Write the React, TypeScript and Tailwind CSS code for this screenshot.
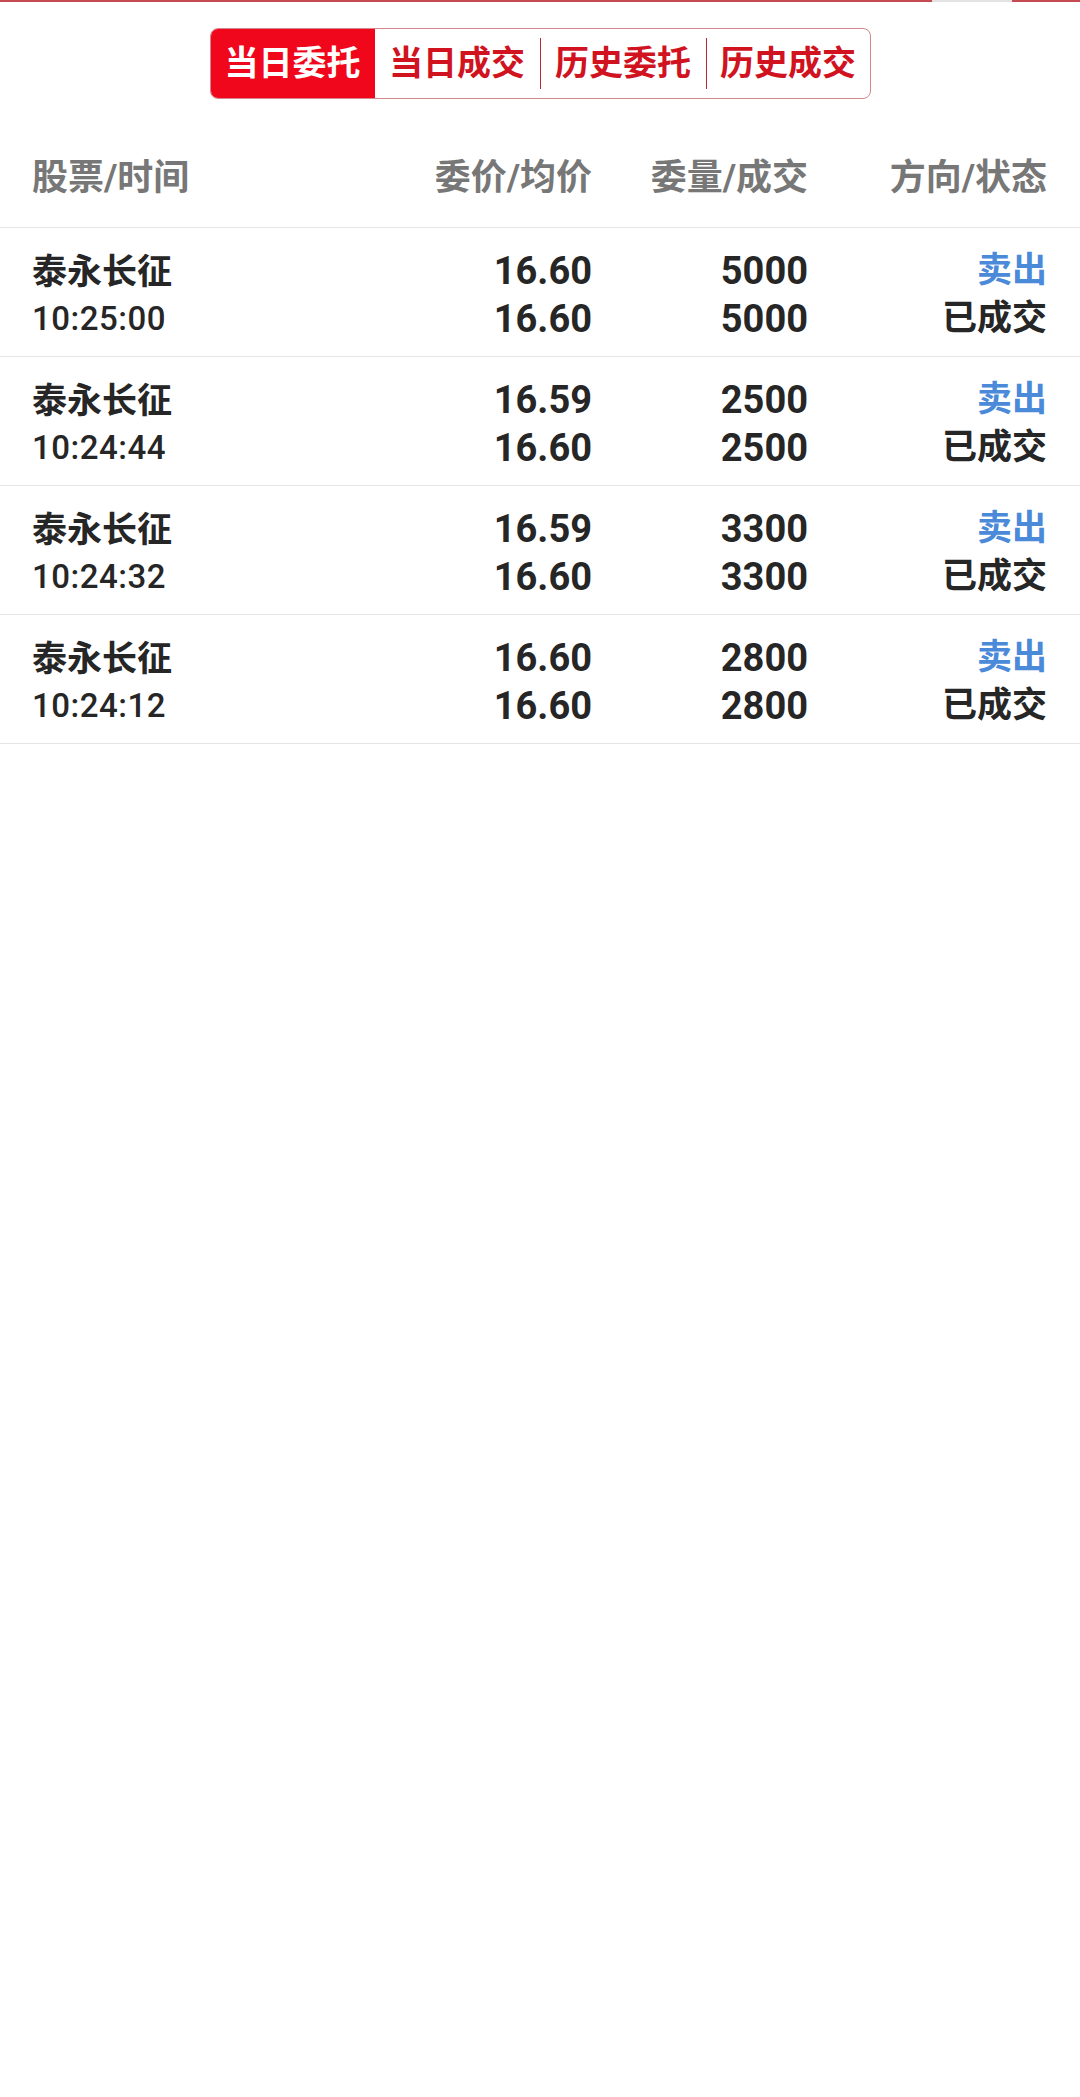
import React from "react";

const rows = [
  { name: "泰永长征", time: "10:25:00", p1: "16.60", p2: "16.60", q1: "5000", q2: "5000" },
  { name: "泰永长征", time: "10:24:44", p1: "16.59", p2: "16.60", q1: "2500", q2: "2500" },
  { name: "泰永长征", time: "10:24:32", p1: "16.59", p2: "16.60", q1: "3300", q2: "3300" },
  { name: "泰永长征", time: "10:24:12", p1: "16.60", p2: "16.60", q1: "2800", q2: "2800" },
];

export default function App() {
  return (
    <div className="w-[1080px] min-h-[2097px] bg-white font-['Roboto','Noto_Sans_CJK_SC',sans-serif] text-[#262626]">
      <div className="flex h-[2px]">
        <div className="w-[932px] bg-[#c64a52]" />
        <div className="w-[80px] bg-[#e3e3e3]" />
        <div className="flex-1 bg-[#c64a52]" />
      </div>
      <div className="flex justify-center pt-[26px]">
        <div className="flex h-[71px] rounded-[8px] border-[1.5px] border-[#d4878d] overflow-hidden">
          <div className="w-[164px] flex items-center justify-center bg-[#f0071b] text-white text-[34px] font-bold">
            当日委托
          </div>
          <div className="w-[166px] flex items-center justify-center text-[#d0131f] text-[34px] font-bold border-r-[1.5px] border-[#b32a31] my-[9px]">
            当日成交
          </div>
          <div className="w-[166px] flex items-center justify-center text-[#d0131f] text-[34px] font-bold border-r-[1.5px] border-[#b32a31] my-[9px]">
            历史委托
          </div>
          <div className="w-[163px] flex items-center justify-center text-[#d0131f] text-[34px] font-bold">
            历史成交
          </div>
        </div>
      </div>
      <div className="mt-[28px] h-[101px] grid grid-cols-[344px_216px_216px_239px] items-center px-[32px] pt-[2px] border-b border-[#e6e6e6] text-[36px] font-bold text-[#777777]">
        <div>股票/时间</div>
        <div className="text-right">委价/均价</div>
        <div className="text-right">委量/成交</div>
        <div className="text-right">方向/状态</div>
      </div>
      {rows.map((r, i) => (
        <div
          key={i}
          className="grid grid-cols-[344px_216px_216px_239px] px-[32px] pt-[19px] pb-[13px] border-b border-[#e6e6e6] leading-[48px]"
        >
          <div className="flex flex-col">
            <span className="text-[35px] font-bold text-[#262626] leading-[52px]">{r.name}</span>
            <span className="text-[33px] font-medium text-[#262626] leading-[40px] tracking-[0.5px]">{r.time}</span>
          </div>
          <div className="flex flex-col items-end text-[38px] font-bold">
            <span>{r.p1}</span>
            <span>{r.p2}</span>
          </div>
          <div className="flex flex-col items-end text-[38px] font-bold">
            <span>{r.q1}</span>
            <span>{r.q2}</span>
          </div>
          <div className="flex flex-col items-end text-[35px] font-bold">
            <span className="text-[#4a8ad9]">卖出</span>
            <span className="text-[#262626]">已成交</span>
          </div>
        </div>
      ))}
    </div>
  );
}
